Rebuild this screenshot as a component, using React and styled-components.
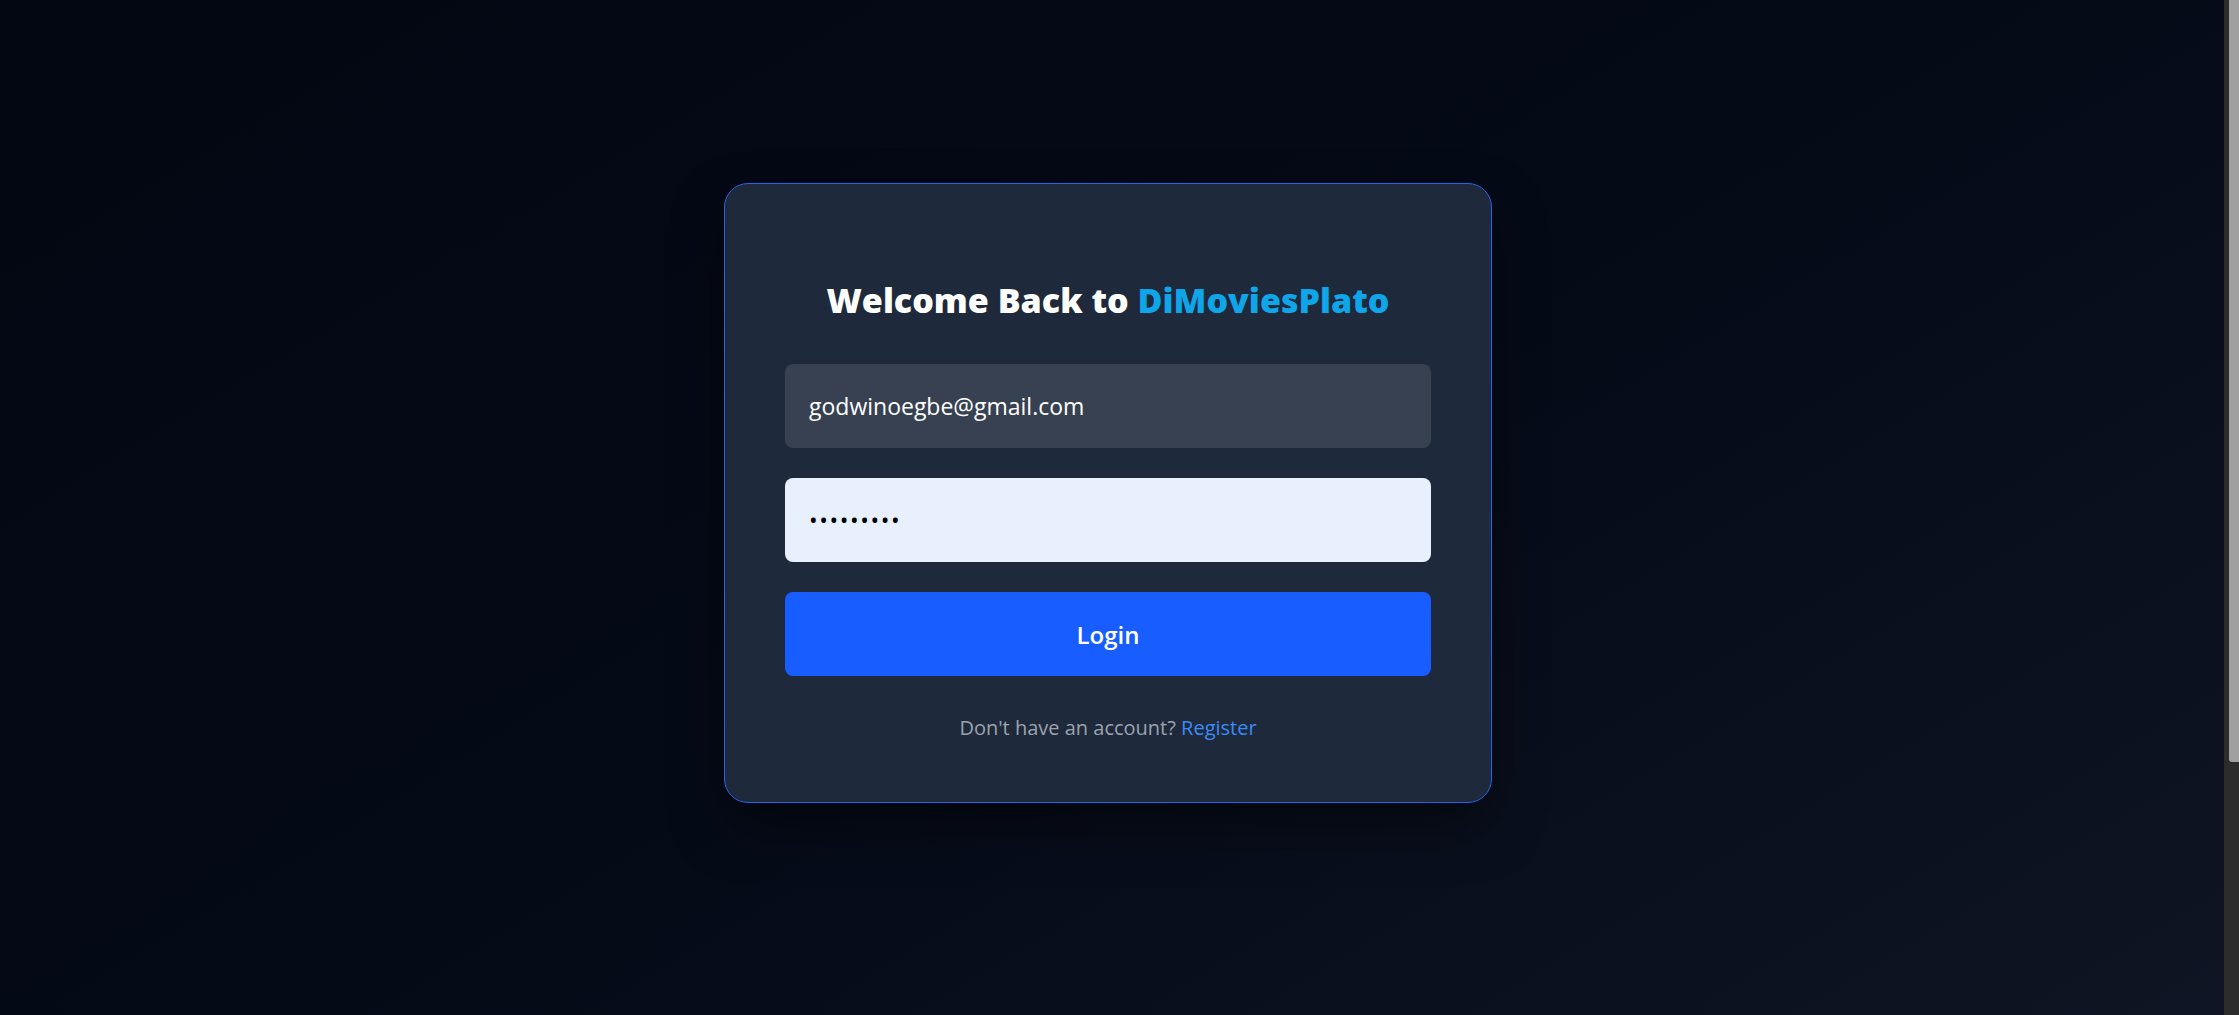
import React from "react";
import styled, { createGlobalStyle } from "styled-components";

const GlobalStyle = createGlobalStyle`
  html, body {
    margin: 0;
    padding: 0;
    background: #030712;
  }
  body {
    font-family: "Open Sans", "Noto Sans", "Liberation Sans", sans-serif;
  }
  * {
    box-sizing: border-box;
  }
`;

// browser scrollbar as seen in the shot (the headless one hides its own)
const ScrollTrack = styled.div`
  position: fixed;
  top: 0;
  right: 0;
  width: 15px;
  height: 100vh;
  background: #2c2c2c;
  display: flex;
  justify-content: flex-end;
`;

const ScrollThumb = styled.div`
  width: 10px;
  height: 762px;
  background: #a0a0a0;
  border-bottom-left-radius: 3px;
`;

const Page = styled.div`
  min-height: 1352px;
  background: linear-gradient(to bottom right, #030712 0%, #050a17 45%, #111827 100%);
  display: flex;
  justify-content: center;
  align-items: flex-start;
  padding: 183px 23px 0 0;
`;

const Card = styled.form`
  width: 768px;
  background: #1e293b;
  border: 1px solid #2563eb;
  border-radius: 24px;
  padding: 96px 60px 60px;
  box-shadow: 0 25px 60px -12px rgba(0, 0, 0, 0.6);
  display: flex;
  flex-direction: column;
`;

const Title = styled.h1`
  margin: 0 0 44px;
  font-size: 34px;
  line-height: 40px;
  font-weight: 800;
  color: #ffffff;
  text-align: center;
`;

const Brand = styled.span`
  color: #0ea5e9;
`;

const Field = styled.input`
  height: 84px;
  width: 100%;
  border: none;
  outline: none;
  border-radius: 8px;
  padding: 0 24px;
  margin-bottom: 30px;
  font-family: inherit;
  font-size: 23px;
  letter-spacing: ${(p) => (p.$filled ? "1.6px" : "0")};
  background: ${(p) => (p.$filled ? "#e8f0fe" : "#374151")};
  color: ${(p) => (p.$filled ? "#000000" : "#ffffff")};
`;

const LoginButton = styled.button`
  height: 84px;
  width: 100%;
  border: none;
  border-radius: 8px;
  background: #175dff;
  color: #ffffff;
  font-family: inherit;
  font-size: 24px;
  font-weight: 600;
  cursor: pointer;
`;

const Footer = styled.p`
  margin: 38px 0 0;
  text-align: center;
  font-size: 20px;
  line-height: 28px;
  color: #9ca3af;
`;

const RegisterLink = styled.a`
  color: #3b8bf6;
  text-decoration: none;
`;

export default function App() {
  return (
    <>
      <GlobalStyle />
      <Page>
        <Card onSubmit={(e) => e.preventDefault()}>
          <Title>
            Welcome Back to <Brand>DiMoviesPlato</Brand>
          </Title>
          <Field type="email" defaultValue="godwinoegbe@gmail.com" />
          <Field type="password" defaultValue="123456789" $filled />
          <LoginButton type="submit">Login</LoginButton>
          <Footer>
            Don't have an account? <RegisterLink href="#">Register</RegisterLink>
          </Footer>
        </Card>
      </Page>
      <ScrollTrack>
        <ScrollThumb />
      </ScrollTrack>
    </>
  );
}
